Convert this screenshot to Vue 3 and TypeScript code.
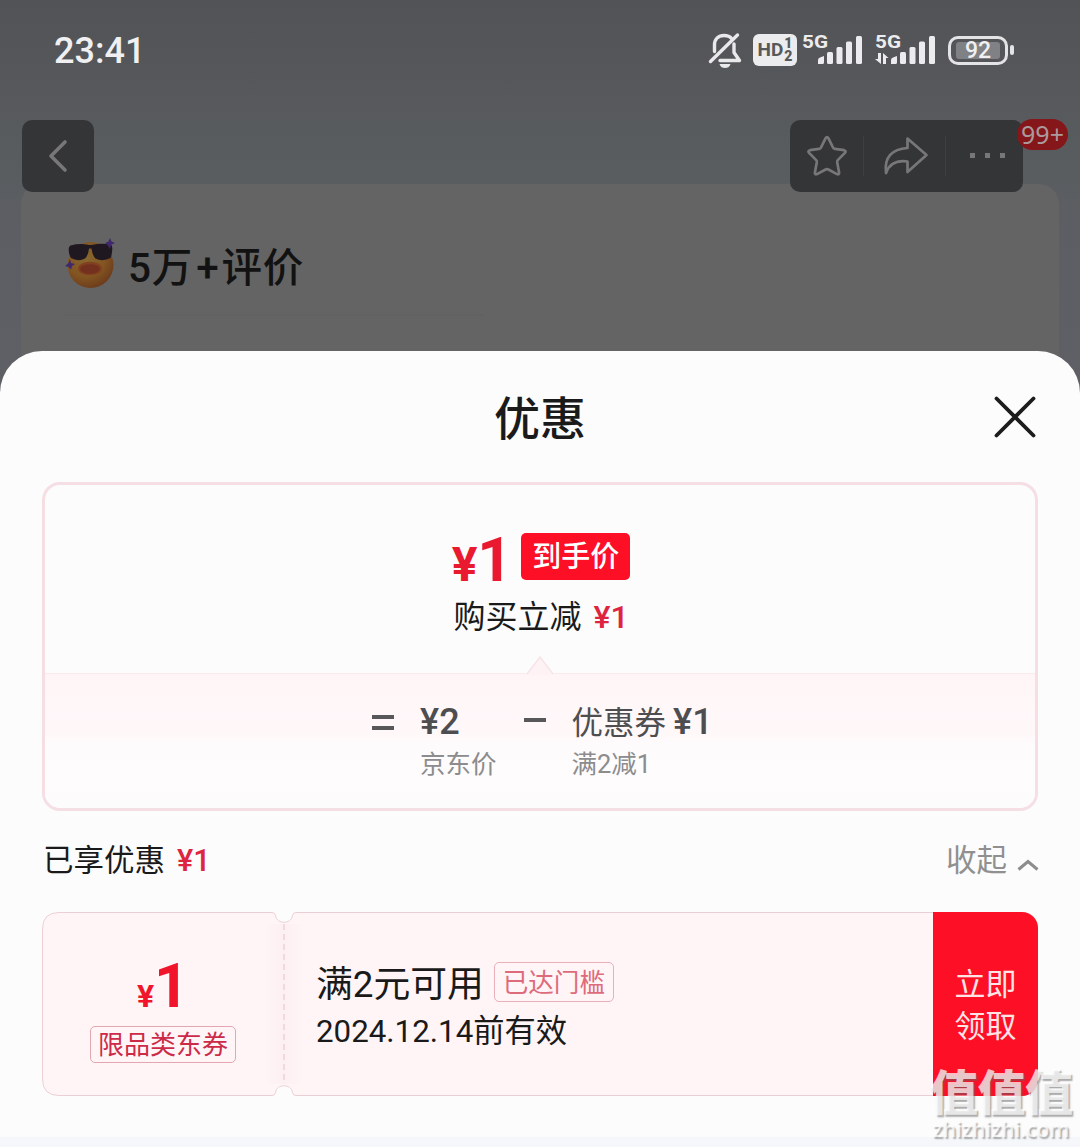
<script setup lang="ts">
import { ref } from 'vue';

interface SignalItem {
  id: number;
  transfer: boolean;
}

const signals: SignalItem[] = [
  { id: 1, transfer: false },
  { id: 2, transfer: true },
];

const time = ref('23:41');
const battery = ref(92);
const messageCount = ref('99+');

const coupon = {
  amount: 1,
  type: '限品类东券',
  title: '满2元可用',
  status: '已达门槛',
  expire: '2024.12.14前有效',
};
</script>

<template>
  <div class="page">
    <header class="status-bar">
      <span class="time">{{ time }}</span>
      <div class="status-icons">
        <svg class="bell" width="36" height="40" viewBox="0 0 36 40">
          <g fill="none" stroke="#e9e9eb" stroke-width="3.400" stroke-linecap="round" stroke-linejoin="round">
            <path d="M7.500 21.500V15c0-6 4-9.500 9.500-9.500 3.500 0 6 1 7.500 3" />
            <path d="M27 14v8.500l5.500 8H13" />
            <path d="M30.500 5L3.500 31.500" />
          </g>
          <path d="M12.500 34h11c-1 3-3 4-5.500 4s-4.500-1-5.500-4z" fill="#e9e9eb" />
        </svg>
        <div class="hd">
          <span>HD</span>
          <span class="hd-num"><i>1</i><i>2</i></span>
        </div>
        <svg v-for="s in signals" :key="s.id" class="signal" width="61" height="34" viewBox="0 0 61 34">
          <text x="0" y="14.500" textLength="26" lengthAdjust="spacingAndGlyphs" class="net">5G</text>
          <g fill="#ececee">
            <path d="M16 31v-4q0-2 2-2.500l4-1.500v6.500q0 1.500-1.500 1.500z" />
            <rect x="25" y="19" width="6" height="12" rx="1.500" />
            <rect x="34.500" y="14" width="6" height="17" rx="1.500" />
            <rect x="44" y="8.500" width="6" height="22.500" rx="1.500" />
            <rect x="54" y="3" width="6" height="28" rx="1.500" />
            <path v-if="s.transfer" d="M3 20h3v11L0 26h3zM8 31V20l5.500 5H11v6z" />
          </g>
        </svg>
        <div class="battery">
          <div class="battery-body"><span>{{ battery }}</span></div>
          <div class="battery-cap"></div>
        </div>
      </div>
    </header>

    <nav class="nav">
      <button class="nav-back">
        <svg width="20" height="36" viewBox="0 0 20 36">
          <path d="M17 4L3 18l14 14" fill="none" stroke="#77777a" stroke-width="3.600" stroke-linecap="round" stroke-linejoin="round" />
        </svg>
      </button>
      <div class="nav-actions">
        <div class="action">
          <svg width="42" height="42" viewBox="0 0 42 42">
            <path d="M19.600 3.200q1.400-2.200 2.800 0l4.600 9.300q.6 1.200 2 1.400l9 1.300q2.600.6.900 2.700l-6.900 7q-1 1-.8 2.400l1.900 10.300q.1 2.500-2.200 1.500l-8.500-4.600q-1.400-.7-2.800 0l-8.500 4.600q-2.300 1-2.200-1.500l1.900-10.300q.2-1.400-.8-2.400l-6.900-7q-1.700-2.100.9-2.700l9-1.300q1.400-.2 2-1.400z" fill="none" stroke="#77777a" stroke-width="2.700" />
          </svg>
        </div>
        <div class="action share">
          <svg width="46" height="42" viewBox="0 0 46 42">
            <path d="M24.500 3.500L43.500 20 24.500 37V26.500C14 25 6 29 3 38 1 22 9 14 24.500 13z" fill="none" stroke="#77777a" stroke-width="2.700" stroke-linejoin="round" />
          </svg>
        </div>
        <div class="action dots"><i></i><i></i><i></i></div>
        <span class="badge">{{ messageCount }}</span>
      </div>
    </nav>

    <section class="comment-card">
      <div class="comment-title">
        <svg width="52" height="52" viewBox="0 0 52 52">
          <defs>
            <radialGradient id="face" cx="0.400" cy="0.350" r="0.700">
              <stop offset="0" stop-color="#88682f" />
              <stop offset="0.600" stop-color="#825421" />
              <stop offset="1" stop-color="#6b3a1c" />
            </radialGradient>
          </defs>
          <circle cx="26.500" cy="27" r="23" fill="url(#face)" />
          <path d="M6.500 7.500q9-2.500 17.500-.8 2 .8 4.500 0 9-2 18-.2 2 .6 1.800 4.500-.3 6-1.800 9-8 4-15 .5-3-3-4-10h-2.500q-.8 7-4 10-7 3.500-14-.5Q4.500 16 4.700 11q.2-3 1.800-3.500z" fill="#1f1820" />
          <ellipse cx="26" cy="30.500" rx="12" ry="6.800" fill="#81401f" />
          <ellipse cx="26" cy="31" rx="10" ry="4.800" fill="#74301f" />
          <path d="M46 0l1.500 3.500L51 5l-4 2-1 4-2.500-4L41 5l3.500-1.500zM6 21l1 4 4 1-3 2-1 3.500-2.500-2.500L1 28l3.500-3z" fill="#40286d" />
        </svg>
        <span>5万<b>+</b>评价</span>
      </div>
      <div class="comment-line"></div>
    </section>

    <main class="sheet">
      <div class="sheet-header">
        <h1>优惠</h1>
        <button class="close">
          <svg width="42" height="42" viewBox="0 0 42 42">
            <path d="M2.500 2.500l37 37M39.500 2.500l-37 37" stroke="#1c1c1c" stroke-width="3.800" stroke-linecap="round" />
          </svg>
        </button>
      </div>

      <section class="price-box">
        <div class="price-top">
          <div class="final-price">
            <span class="yen">¥</span>
            <span class="num">1</span>
            <span class="price-tag">到手价</span>
          </div>
          <div class="reduce">购买立减<em>¥1</em></div>
        </div>
        <div class="formula">
          <svg class="arrow" width="28" height="20" viewBox="0 0 28 20">
            <path d="M1 19L14 2l13 17v1H1z" fill="#fef2f5" />
            <path d="M1 19L14 2l13 17" fill="none" stroke="#f6e4e9" stroke-width="1.500" />
          </svg>
          <div class="equal"><i></i><i></i></div>
          <div class="term first">
            <div class="value"><b>¥2</b></div>
            <div class="label">京东价</div>
          </div>
          <div class="minus"></div>
          <div class="term">
            <div class="value">优惠券<b class="gap">¥1</b></div>
            <div class="label">满2减1</div>
          </div>
        </div>
      </section>

      <div class="enjoyed">
        <span>已享优惠<em>¥1</em></span>
        <span class="fold">
          收起
          <svg width="22" height="14" viewBox="0 0 22 14">
            <path d="M1.500 11.500L11 3.500l9.500 8" fill="none" stroke="#8d8d8d" stroke-width="3" />
          </svg>
        </span>
      </div>

      <section class="coupon">
        <svg class="coupon-bg" width="996" height="185" viewBox="0 0 996 185">
          <defs>
            <linearGradient id="fold" x1="0" x2="1">
              <stop offset="0" stop-color="#fbeaed" stop-opacity="0" />
              <stop offset="0.500" stop-color="#fbeaed" />
              <stop offset="1" stop-color="#fbeaed" stop-opacity="0" />
            </linearGradient>
          </defs>
          <path d="M17 .5H230q3 0 3.500 3c1 9 16 9 17 0q.5-3 3.500-3H979q16.500 0 16.500 16.500V167q0 16.500-16.500 16.500H254q-3 0-3.500-3c-1-9-16-9-17 0q-.5 3-3.500 3H17Q.5 183.500.5 167V17Q.5.5 17 .5z" fill="#fff5f6" stroke="#eccfd5" />
          <rect x="222" y="12" width="40" height="160" fill="url(#fold)" opacity="0.500" />
          <path d="M242 12V172" stroke="#f3d9de" stroke-width="2" stroke-dasharray="6 4" />
        </svg>
        <div class="coupon-left">
          <div class="coupon-amount"><small>¥</small>{{ coupon.amount }}</div>
          <div class="coupon-type">{{ coupon.type }}</div>
        </div>
        <div class="coupon-info">
          <div class="coupon-title">
            <span>{{ coupon.title }}</span>
            <span class="reached">{{ coupon.status }}</span>
          </div>
          <div class="expire">{{ coupon.expire }}</div>
        </div>
        <button class="receive">立即<br />领取</button>
      </section>
    </main>

    <div class="watermark">
      <div class="wm-name">值值值</div>
      <div class="wm-site">zhizhizhi.com</div>
    </div>
  </div>
</template>

<style>
body {
  margin: 0;
}
</style>

<style scoped>
.page {
  position: relative;
  display: flex;
  flex-direction: column;
  width: 1080px;
  height: 1147px;
  overflow: hidden;
  box-sizing: border-box;
  background: linear-gradient(#525356 0, #56575a 80px, #585b5e 130px, #595d60 180px, #5d5e63 220px, #5f6066 400px, #f5f7fb 401px);
  font-family: Roboto, "Noto Sans CJK SC", sans-serif;
  color: #1a1a1a;
}

button {
  border: none;
  padding: 0;
  font-family: inherit;
  cursor: pointer;
}

em,
i {
  font-style: normal;
}

.status-bar {
  display: flex;
  flex: none;
  justify-content: space-between;
  align-items: center;
  height: 100px;
  padding: 0 66px 0 54px;
  color: #f0f0f2;
}

.time {
  padding-top: 2px;
  font-size: 36px;
  font-weight: 500;
  line-height: 40px;
}

.status-icons {
  display: flex;
  align-items: center;
}

.hd {
  display: flex;
  align-items: center;
  justify-content: center;
  width: 44px;
  height: 32px;
  margin: 0 5px 0 10px;
  border-radius: 6px;
  background: #ececee;
  color: #57585b;
  font: 700 19px/32px Roboto, sans-serif;
}

.hd-num {
  display: flex;
  flex-direction: column;
  margin-left: 1px;
  font-size: 14px;
  line-height: 13px;
  font-weight: 900;
}

.signal {
  margin-right: 12px;
  overflow: visible;
}

.net {
  fill: #ececee;
  font: 700 19px Roboto, sans-serif;
}

.battery {
  display: flex;
  align-items: center;
  gap: 2px;
}

.battery-body {
  display: flex;
  box-sizing: border-box;
  width: 60px;
  height: 29px;
  padding: 3px 5px;
  border: 3px solid #e4e4e6;
  border-radius: 10px;
}

.battery-body span {
  flex: 1;
  border-radius: 3px;
  background: #808184;
  font-size: 23px;
  font-weight: 500;
  line-height: 18px;
  text-align: center;
}

.battery-cap {
  width: 4px;
  height: 10px;
  border-radius: 2px;
  background: #e4e4e6;
}

.nav {
  position: relative;
  z-index: 1;
  display: flex;
  flex: none;
  justify-content: space-between;
  padding: 20px 57px 0 22px;
}

.nav-back {
  display: flex;
  align-items: center;
  justify-content: center;
  width: 72px;
  height: 72px;
  border-radius: 10px;
  background: #343537;
}

.nav-actions {
  position: relative;
  display: flex;
  align-items: center;
  width: 233px;
  height: 72px;
  border-radius: 10px;
  background: #343537;
}

.action {
  display: flex;
  flex: none;
  align-items: center;
  justify-content: center;
  box-sizing: border-box;
  width: 73px;
  height: 40px;
}

.action + .action {
  border-left: 1px solid #3e3f41;
}

.action.share {
  width: 82px;
  padding-left: 3px;
}

.action.dots {
  gap: 10px;
  width: 78px;
  padding-left: 6px;
  padding-bottom: 2px;
}

.dots i {
  width: 5px;
  height: 5px;
  background: #77777a;
}

.badge {
  position: absolute;
  left: 227px;
  top: -1px;
  width: 51px;
  height: 31px;
  border-radius: 16px;
  background: #85161a;
  color: #ab9a9b;
  font: 25px/31px "Noto Sans", sans-serif;
  text-align: center;
}

.comment-card {
  flex: none;
  box-sizing: border-box;
  height: 230px;
  margin: -8px 21px 0;
  padding: 54px 43px 0;
  border-radius: 20px;
  background: #646464;
}

.comment-title {
  display: flex;
  align-items: center;
  height: 52px;
  font-size: 40.500px;
  line-height: 52px;
  color: #121212;
  font-weight: 500;
}

.comment-title span {
  margin-left: 12px;
  padding-top: 8px;
  letter-spacing: 0.8px;
}

.comment-title b {
  font-weight: 500;
  margin: 0 2px 0 3px;
}

.comment-line {
  width: 420px;
  height: 2px;
  margin-top: 24px;
  background: #626262;
}

.sheet {
  position: relative;
  z-index: 2;
  flex: none;
  box-sizing: border-box;
  height: 786px;
  margin-top: -63px;
  padding: 0 42px;
  border-radius: 42px 42px 0 0;
  background: #fcfcfc;
}

.sheet-header {
  position: relative;
  display: flex;
  align-items: center;
  justify-content: center;
  height: 131px;
}

.sheet-header h1 {
  margin: 0;
  padding-top: 4px;
  font-size: 46px;
  font-weight: 500;
  line-height: 60px;
}

.close {
  position: absolute;
  right: 2px;
  top: 45px;
  display: flex;
  background: none;
}

.price-box {
  box-sizing: border-box;
  height: 329px;
  border: 3px solid #f5dfe4;
  border-radius: 18px;
  overflow: hidden;
}

.price-top {
  display: flex;
  flex-direction: column;
  align-items: center;
  height: 188px;
  box-sizing: border-box;
  padding: 47px 0 0 2px;
}

.final-price {
  display: flex;
  align-items: baseline;
  height: 60px;
  color: #e91a2f;
  font-weight: 700;
  line-height: 56px;
}

.yen {
  font-size: 48px;
}

.num {
  width: 38px;
  font-size: 61px;
}

.price-tag {
  align-self: flex-start;
  width: 109px;
  height: 47px;
  margin-left: 6px;
  margin-top: 1px;
  border-radius: 5px;
  background: #fd0f26;
  color: #fff;
  font-size: 29px;
  font-weight: 500;
  line-height: 49px;
  text-align: center;
}

.reduce {
  margin-top: 3px;
  font-size: 32px;
  line-height: 44px;
}

em {
  margin-left: 12px;
  color: #dd2440;
  font-weight: 500;
}

.formula {
  position: relative;
  display: flex;
  height: 135px;
  padding-left: 327px;
  box-sizing: border-box;
  border-top: 1px solid #fbebee;
  background: linear-gradient(#fff5f7 0, #fff8f9 60px, #fefbfc 70px, #fdfcfd 100%);
  color: #4e4e50;
}

.arrow {
  position: absolute;
  left: 481px;
  top: -19px;
}

.equal {
  display: flex;
  flex-direction: column;
  gap: 7px;
  margin-top: 41px;
}

.equal i,
.minus {
  width: 22px;
  height: 4px;
  background: #58585a;
}

.minus {
  margin: 44px 26px 0 27px;
}

.term {
  padding-top: 26px;
}

.first {
  margin-left: 26px;
}

.value {
  height: 44px;
  font-size: 31.500px;
  line-height: 44px;
}

.value b {
  font-size: 36px;
  font-weight: 500;
}

.value .gap {
  margin-left: 7px;
}

.label {
  margin-top: 2px;
  color: #8c8c8e;
  font-size: 25.500px;
  line-height: 36px;
}

.enjoyed {
  display: flex;
  justify-content: space-between;
  align-items: center;
  height: 99px;
  padding: 0 0 2px 1px;
  font-size: 30.500px;
  line-height: 44px;
}

.fold {
  display: flex;
  align-items: center;
  gap: 10px;
  color: #909090;
}

.fold svg {
  margin-top: 9px;
  margin-right: -1px;
}

.coupon {
  position: relative;
  display: flex;
  height: 184px;
}

.coupon-bg {
  position: absolute;
  left: 0;
  top: 0;
}

.coupon-left,
.coupon-info,
.receive {
  position: relative;
}

.coupon-left {
  display: flex;
  flex-direction: column;
  align-items: center;
  width: 242px;
  padding-top: 44px;
  box-sizing: border-box;
  color: #f0152b;
}

.coupon-amount {
  height: 60px;
  font-size: 61px;
  font-weight: 700;
  line-height: 60px;
}

.coupon-amount small {
  font-size: 32px;
}

.coupon-type {
  box-sizing: border-box;
  width: 146px;
  height: 37px;
  margin-top: 10px;
  border: 1px solid #e3a7b2;
  border-radius: 5px;
  color: #cc2b48;
  font-size: 26px;
  line-height: 36px;
  text-align: center;
}

.coupon-info {
  flex: 1;
  padding: 51px 0 0 32px;
}

.coupon-title {
  display: flex;
  align-items: center;
  height: 44px;
  font-size: 36.800px;
  line-height: 44px;
}

.reached {
  box-sizing: border-box;
  width: 120px;
  height: 40px;
  margin: -6px 0 0 10px;
  border: 1px solid #e9b0ba;
  border-radius: 5px;
  color: #de6b7b;
  font-size: 25.600px;
  line-height: 40px;
  text-align: center;
}

.expire {
  margin-top: 3px;
  font-size: 31.300px;
  line-height: 44px;
}

.receive {
  width: 105px;
  padding-top: 4px;
  border-radius: 0 16px 16px 0;
  background: #fd0f26;
  color: #ffe3e5;
  font-size: 31px;
  line-height: 42px;
}

.watermark {
  position: absolute;
  z-index: 3;
  left: 930px;
  top: 1062px;
  width: 142px;
  color: rgba(255, 255, 255, 0.72);
  text-align: center;
  text-shadow: 1.500px 1.500px 1.500px rgba(100, 100, 100, 0.55);
  white-space: nowrap;
}

.wm-name {
  height: 56px;
  font: 900 48px/54px "Noto Sans CJK SC", sans-serif;
  letter-spacing: -0.5px;
}

.wm-site {
  font: 600 21px/22px "Open Sans", sans-serif;
}
</style>
